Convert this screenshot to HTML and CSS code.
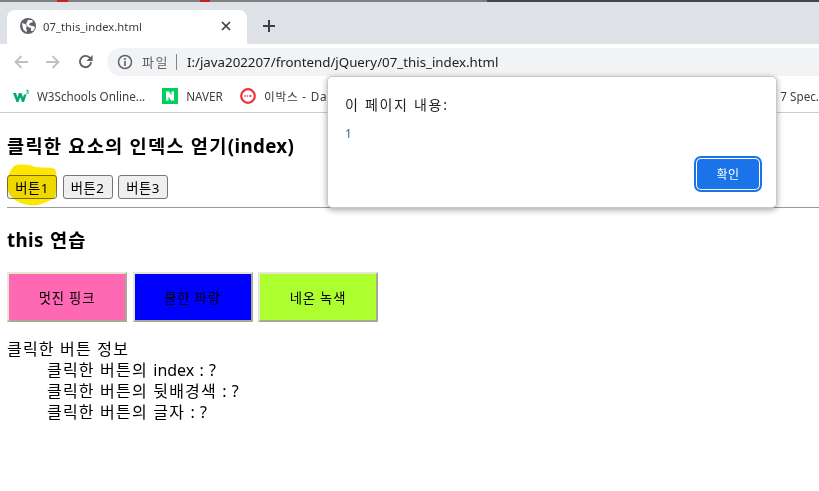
FILE: index.html
```html
<!DOCTYPE html>
<html lang="ko">
<head>
    <meta charset="UTF-8">
    <title>07_this_index.html</title>
    <link rel="stylesheet" href="styles.css">
</head>
<body>
    <!-- Browser chrome -->
    <div class="topline"></div>
    <div class="tabstrip">
        <div class="tab">
            <svg class="favicon" width="16" height="16" viewBox="0 0 16 16"><circle cx="8" cy="8" r="8" fill="#5f6368"/><path d="M2 5l3 1 2 2-1 2 1 3-1 1-3-3zM8 2l4 0 1 2-3 1-1 2 3 1 2 0 1 2-2 3-2 0 0-3-3-1-2-3 1-2z" fill="#fff"/></svg>
            <span class="tab-title">07_this_index.html</span>
            <svg class="tab-close" width="10" height="10" viewBox="0 0 10 10"><path d="M1 1l8 8M9 1l-8 8" stroke="#3c4043" stroke-width="1.7"/></svg>
        </div>
        <svg class="newtab" width="14" height="14" viewBox="0 0 14 14"><path d="M7 1v12M1 7h12" stroke="#3c4043" stroke-width="2"/></svg>
    </div>
    <div class="toolbar">
        <svg class="navicon" width="14" height="14" viewBox="0 0 14 14"><path d="M14 7H1.500M7.500 1L1.500 7l6 6" fill="none" stroke="#bdc1c6" stroke-width="1.800"/></svg>
        <svg class="navicon" width="14" height="14" viewBox="0 0 14 14"><path d="M0 7h12.500M6.500 1l6 6-6 6" fill="none" stroke="#bdc1c6" stroke-width="1.800"/></svg>
        <svg class="navicon" width="15" height="15" viewBox="0 0 16 16"><path d="M13.200 5A6 6 0 1 0 14 8.600" fill="none" stroke="#5f6368" stroke-width="2"/><path d="M15.500 1v6.500H9z" fill="#5f6368"/></svg>
        <div class="omnibox">
            <svg width="16" height="16" viewBox="0 0 16 16"><circle cx="8" cy="8" r="6.500" fill="none" stroke="#5f6368" stroke-width="1.500"/><path d="M8 7v5M8 4v2" stroke="#5f6368" stroke-width="1.600"/></svg>
            <span class="scheme">파일</span>
            <span class="divider"></span>
            <span class="url">I:/java202207/frontend/jQuery/07_this_index.html</span>
        </div>
    </div>
    <div class="bookmarks">
        <div class="bookmark">
            <svg width="16" height="14" viewBox="0 0 16 14"><path d="M0 4h3l1.500 4.500L6 4h2.500L10 8.500 11 5.500h2.500L11 13H9L7.200 8 5.500 13h-2z" fill="#04aa6d"/><path d="M13 1.200h2.200L14 2.500h1.300v1.800H13" fill="none" stroke="#04aa6d" stroke-width=".8"/></svg>
            <span>W3Schools Online...</span>
        </div>
        <div class="bookmark">
            <svg width="16" height="16" viewBox="0 0 16 16"><rect width="16" height="16" fill="#03cf5d"/><path d="M4 3.500h3l2.500 4v-4H12v9H9l-2.500-4v4H4z" fill="#fff"/></svg>
            <span>NAVER</span>
        </div>
        <div class="bookmark">
            <svg width="16" height="16" viewBox="0 0 16 16"><circle cx="8" cy="8" r="6.800" fill="#fff" stroke="#e8343f" stroke-width="2.200"/><path d="M4.500 8h1.500M7 8h1M9 8h2.500" stroke="#e8343f" stroke-width="1.500"/></svg>
            <span class="ko">이박스 - Da</span>
        </div>
        <div class="bookmark bookmark-last"><span>7 Spec.</span></div>
    </div>

    <!-- Page -->
    <div class="page">
        <h3 class="first-title">클릭한 요소의 인덱스 얻기<span class="en">(index)</span></h3>
        <div class="btn-row">
            <button class="small-btn">버튼1</button>
            <button class="small-btn">버튼2</button>
            <button class="small-btn">버튼3</button>
        </div>
        <hr>
        <h3 class="second-title"><span class="en">this</span> 연습</h3>
        <div class="color-row">
            <button class="color-btn pink">멋진 핑크</button>
            <button class="color-btn blue">쿨한 파랑</button>
            <button class="color-btn green">네온 녹색</button>
        </div>
        <div class="info">
            <div class="info-line">클릭한 버튼 정보</div>
            <div class="info-line indent">클릭한 버튼의 <span class="en">index : ?</span></div>
            <div class="info-line indent">클릭한 버튼의 뒷배경색 <span class="en">: ?</span></div>
            <div class="info-line indent">클릭한 버튼의 글자 <span class="en">: ?</span></div>
        </div>
    </div>

    <!-- Yellow marker over the first button -->
    <svg class="marker" width="52" height="42" viewBox="0 0 52 42"><path d="M9 2C13 0 24 0 30 3C38 4 47 3 50 5C53 12 52 26 50 33C46 37 38 39 33 41C26 42 18 41 12 37C5 33 2 28 2 20C2 14 5 6 9 2Z" fill="#ffe600"/></svg>

    <!-- Alert -->
    <div class="alert">
        <div class="alert-title">이 페이지 내용:</div>
        <div class="alert-msg">1</div>
        <div class="alert-foot"><button class="alert-ok">확인</button></div>
    </div>
</body>
</html>
```

FILE: styles.css
```css
html, body { margin: 0; padding: 0; height: 100%; overflow: hidden; background: #fff; font-family: "Noto Sans", "Noto Sans CJK KR", sans-serif; color: #000; }

.topline { height: 2px; background: linear-gradient(90deg, #808080 57px, #c8201c 57px, #c8201c 68px, #808080 68px, #808080 200px, #c8201c 200px, #c8201c 210px, #808080 210px, #808080 487px, #444 487px); }
.tabstrip { height: 42px; background: #dee1e6; display: flex; align-items: flex-end; padding-left: 7px; box-sizing: border-box; }
.tab { width: 240px; height: 34px; background: #fff; border-radius: 8px 8px 0 0; display: flex; align-items: center; padding: 0 16px 2px 13px; box-sizing: border-box; }
.favicon { flex: none; }
.tab-title { flex: 1; margin-left: 7px; font-size: 11.300px; color: #3c4043; }
.newtab { margin: 0 0 11px 15px; }

.toolbar { height: 35px; display: flex; align-items: center; padding-left: 14px; box-sizing: border-box; }
.navicon { margin-right: 18px; flex: none; }
.omnibox { height: 28px; flex: 1; margin-left: -4px; background: #f1f3f4; border-radius: 14px 0 0 14px; display: flex; align-items: center; padding-left: 10px; font-size: 14px; color: #202124; }
.scheme { margin-left: 9px; color: #5f6368; font-size: 13px; letter-spacing: 1.500px; }
.divider { width: 1px; height: 16px; background: #80868b; margin: 0 10px 0 7px; }
.url { font-size: 13.300px; }

.bookmarks { height: 33px; border-bottom: 1px solid #ccc; display: flex; align-items: center; padding-left: 13px; font-size: 11.700px; color: #3c4043; }
.bookmark { display: flex; align-items: center; gap: 8px; margin-right: 17px; white-space: nowrap; }
.bookmark-last { margin-left: auto; margin-right: 0; }
.ko { letter-spacing: .8px; }

.page { padding-left: 7px; }
.page h3 { margin: 0; font-size: 18.720px; font-weight: 700; line-height: 26px; letter-spacing: 1.200px; }
.page h3 .en { letter-spacing: .4px; }
.first-title { padding-top: 20px; }
.btn-row { display: flex; gap: 5.500px; margin-top: 16px; }
.small-btn { width: 50px; height: 24px; padding: 0; background: #efefef; border: 1px solid #767676; border-radius: 3px; font: inherit; font-size: 13.330px; letter-spacing: .4px; color: #000; }
hr { margin: 8px 0 0; height: 0; border: 0; border-top: 1px solid #999; }
.second-title { padding-top: 19px; }
.color-row { display: flex; gap: 5.500px; margin-top: 19px; }
.color-btn { width: 120px; height: 50px; padding: 0; border: 2px solid; border-color: #e6e6d2 #a8a894 #a8a894 #e6e6d2; font: inherit; font-size: 13.330px; letter-spacing: .8px; color: #000; }
.pink { background: hotpink; }
.blue { background: blue; }
.green { background: #adff2f; }
.info { margin-top: 16.500px; font-size: 16px; letter-spacing: 1.200px; }
.info-line { height: 21.300px; line-height: 21.300px; }
.indent { padding-left: 40px; }
.info .en { letter-spacing: 0; word-spacing: 1px; }

.marker { position: absolute; left: 5px; top: 164px; mix-blend-mode: multiply; }

.alert { position: absolute; left: 327px; top: 76px; width: 450px; height: 132px; box-sizing: border-box; background: #fff; border: 1px solid #c8c8c8; border-radius: 5px; box-shadow: 0 2px 6px rgba(0,0,0,.35); padding: 18px 16px 0 17px; }
.alert-title { font-size: 14px; line-height: 20px; letter-spacing: 1.700px; color: #202124; }
.alert-msg { margin-top: 11px; font-size: 12px; line-height: 16px; color: #3c6a8c; }
.alert-foot { display: flex; justify-content: flex-end; margin-top: 16px; }
.alert-ok { width: 64px; height: 32px; background: #1a73e8; border: 1px solid #fff; outline: 2px solid #1a73e8; border-radius: 5px; color: #fff; font: inherit; font-size: 12px; letter-spacing: .5px; padding: 0; }
```
